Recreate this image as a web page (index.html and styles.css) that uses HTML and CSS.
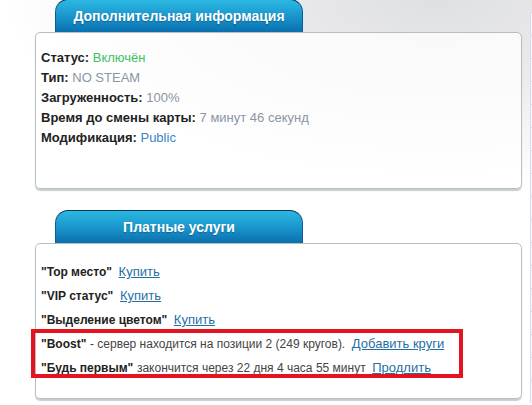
FILE: index.html
```html
<!DOCTYPE html>
<html lang="ru">
<head>
  <meta charset="UTF-8" />
  <title>Информация о сервере</title>
  <link rel="stylesheet" href="styles.css">
</head>
<body>

  <div class="main">
    <div class="section">
      <div class="tab">Дополнительная информация</div>
      <div class="box info">
        <p><b>Статус:</b> <span class="on">Включён</span></p>
        <p><b>Тип:</b> <span class="muted">NO STEAM</span></p>
        <p><b>Загруженность:</b> <span class="muted">100%</span></p>
        <p><b>Время до смены карты:</b> <span class="muted">7 минут 46 секунд</span></p>
        <p><b>Модификация:</b> <span class="mod">Public</span></p>
      </div>
    </div>

    <div class="section">
      <div class="tab">Платные услуги</div>
      <div class="box services">
        <p><b>"Top место"</b> <a href="#">Купить</a></p>
        <p><b>"VIP статус"</b> <a href="#">Купить</a></p>
        <p><b>"Выделение цветом"</b> <a href="#">Купить</a></p>
        <p><b>"Boost"</b> <span class="desc">- сервер находится на позиции 2 (249 кругов).</span> <a href="#">Добавить круги</a></p>
        <p><b>"Будь первым"</b> <span class="desc">закончится через 22 дня 4 часа 55 минут</span> <a href="#">Продлить</a></p>
        <!-- рамка-выделение поверх двух последних строк -->
        <div class="highlight"></div>
      </div>
    </div>
  </div>

  <div class="side">
    <div class="cell"></div>
    <div class="cell"></div>
    <div class="cell"></div>
    <div class="cell"></div>
    <div class="cell"></div>
    <div class="cell"></div>
    <div class="cell"></div>
    <div class="cell"></div>
    <div class="cell"></div>
    <div class="cell"></div>
    <div class="cell"></div>
    <div class="cell"></div>
    <div class="cell"></div>
    <div class="cell"></div>
    <div class="cell"></div>
    <div class="cell"></div>
    <div class="cell"></div>
  </div>

</body>
</html>
```

FILE: styles.css
```css
html, body {
  margin: 0;
  height: 100%;
  overflow: hidden;
}

body {
  display: flex;
  font-family: 'Liberation Sans', Arial, sans-serif;
  font-size: 13px;
  color: #222;
  background: #fff radial-gradient(ellipse 430px 190px at 82% 0, #dfe0e2 0%, #ebebed 45%, #fff 100%) no-repeat;
}

.main {
  width: 487px;
  padding-left: 35px;
}

.section {
  margin-bottom: 21px;
}

.tab {
  margin-left: 20px;
  width: 246px;
  height: 32px;
  line-height: 32px;
  border: 1px solid;
  border-color: #0d3858 #0c5d92 transparent;
  border-bottom: none;
  border-radius: 13px 13px 0 0;
  background: linear-gradient(to bottom, #2bb8e2 0%, #1c9ad0 45%, #0a6fae 100%);
  color: #fff;
  font-size: 14px;
  font-weight: bold;
  text-align: center;
  text-shadow: 0 1px 1px rgba(0, 0, 0, 0.25);
}

.section:first-child .tab {
  margin-top: -1px;
}

.box {
  position: relative;
  border: 1px solid #b5c0c0;
  border-radius: 5px;
  box-shadow: 0 2px 1px #c9cdce;
  background-color: rgba(255, 255, 255, 0.78);
  padding-left: 5px;
  box-sizing: border-box;
}

.box p {
  margin: 0;
}

.info {
  height: 157px;
  padding-top: 15px;
  line-height: 20px;
}

.services {
  height: 156px;
  padding-top: 16px;
  line-height: 23px;
}

/* в платных услугах названия и описания мельче ссылок */
.services b,
.services .desc {
  font-size: 12px;
}

.on {
  color: #3dc163;
}

.muted {
  color: #8a95a5;
}

.mod {
  color: #3a85c6;
}

.desc {
  color: #444;
}

a {
  color: #1f6fa6;
  margin-left: 3px;
}

.highlight {
  position: absolute;
  left: -5px;
  top: 85px;
  width: 432px;
  height: 49px;
  border: 4px solid #e3141f;
  box-sizing: border-box;
}

.side {
  margin-left: 8px;
  padding-top: 12px;
  flex: 1;
}

.cell {
  height: 22px;
  border: 1px solid #d9dfe8;
  border-right: none;
  border-bottom: none;
  background: #f4f6f9;
}
```
